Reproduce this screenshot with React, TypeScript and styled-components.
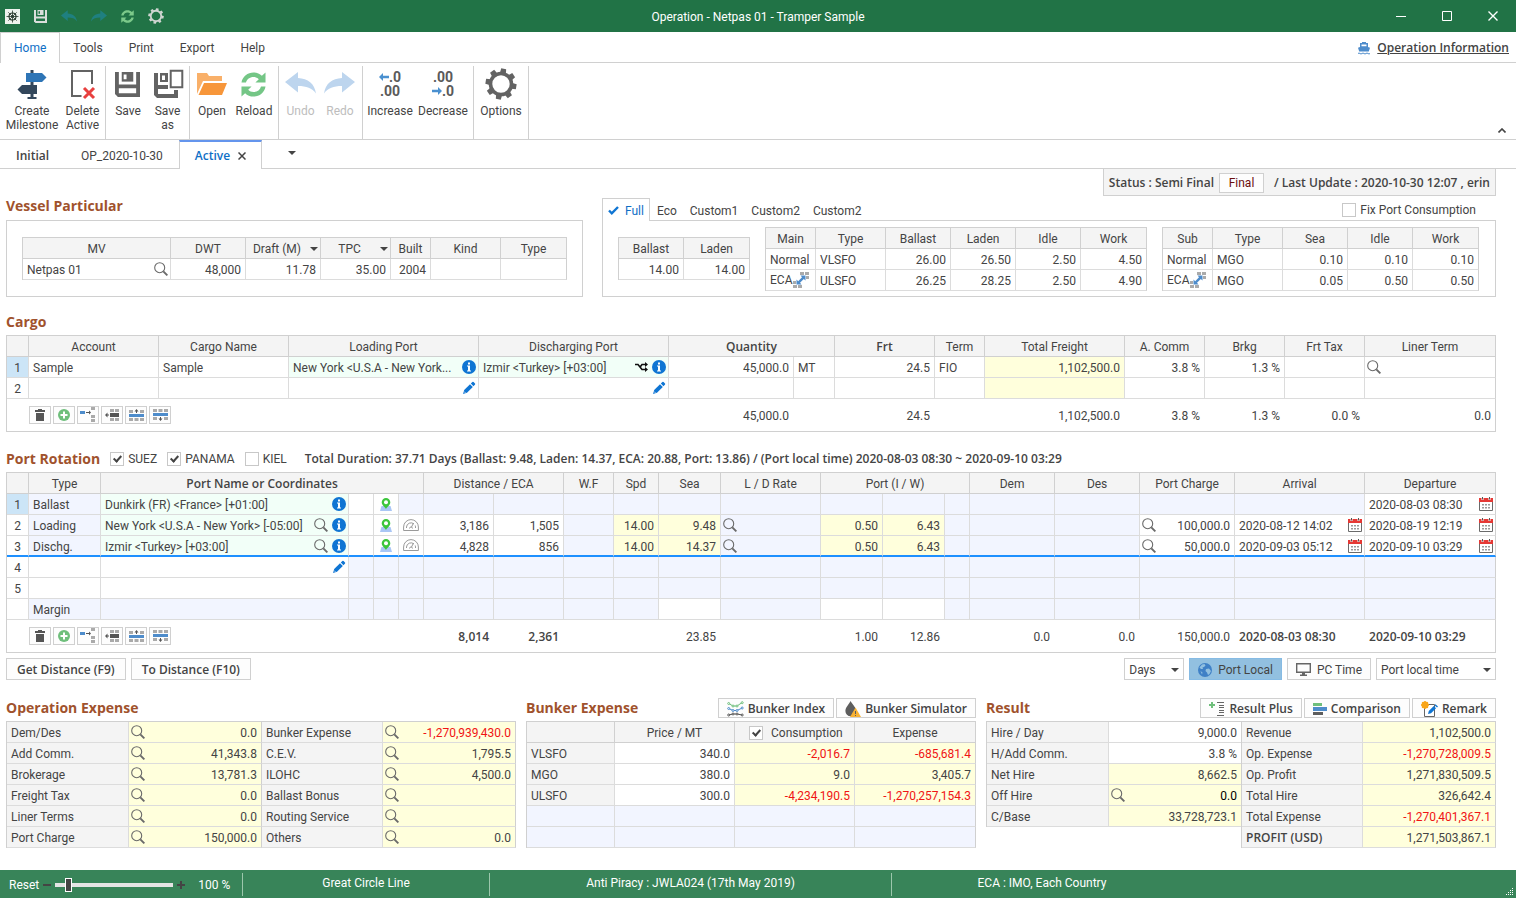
import React from 'react';
import styled, { createGlobalStyle, css } from 'styled-components';

const line = '#d0d0d0';
const innerLine = '#dcdcdc';
const ink = '#444444';
const blue = '#0f75d3';
const font = 'Roboto, "Open Sans", sans-serif';

const strong = css`
  font-family: "Open Sans", "Noto Sans", sans-serif;
  font-weight: 600;
`;

const Global = createGlobalStyle`
  *, *::before, *::after { box-sizing: border-box; }
  body { margin: 0; background: #fff; color: ${ink}; font: 12px/16px ${font}; }
  button, input, select { font: inherit; color: inherit; margin: 0; }
  button { cursor: pointer; }
  svg { display: block; flex: none; }
`;

/* ---------- shell ---------- */

const Window = styled.div`
  min-height: 100vh;
  display: flex;
  flex-direction: column;
`;

const TitleBar = styled.header`
  height: 32px;
  flex: none;
  display: grid;
  grid-template-columns: 1fr auto 1fr;
  align-items: center;
  background: #217346;
  color: #fff;
`;

const QuickAccess = styled.div`
  display: flex;
  align-items: center;
  gap: 14px;
  padding-left: 5px;
`;

const PlainButton = styled.button`
  display: inline-flex;
  align-items: center;
  justify-content: center;
  flex: none;
  padding: 0;
  border: 0;
  background: none;
`;

const Title = styled.h1`
  margin: 0;
  padding-top: 2px;
  font-size: 12px;
  line-height: 16px;
  font-weight: 400;
`;

const WindowButtons = styled.div`
  display: flex;
  justify-content: flex-end;
`;

const WindowButton = styled(PlainButton)`
  width: 46px;
  height: 32px;
`;

const MenuBar = styled.nav`
  height: 31px;
  flex: none;
  display: flex;
  align-items: stretch;
  border-bottom: 1px solid ${line};
`;

const MenuTab = styled.button<{ $active?: boolean }>`
  padding: 0 13px;
  margin-bottom: -1px;
  border: 0;
  background: none;
  ${p => p.$active && css`
    color: #0f6fc6;
    background: #fff;
    border: 1px solid ${line};
    border-bottom: 0;
  `}
`;

const InfoLink = styled.a`
  display: flex;
  align-items: center;
  gap: 7px;
  margin-left: auto;
  padding: 2px 7px 0 0;
  color: ${ink};
  ${strong}
`;

const Ribbon = styled.div`
  height: 77px;
  flex: none;
  display: flex;
  align-items: stretch;
  padding-top: 3px;
  border-bottom: 1px solid ${line};
`;

const RibbonGroup = styled.div`
  display: flex;
  align-items: flex-start;
  padding: 0 2px;
  border-right: 1px solid ${line};
`;

const RibbonButton = styled.button<{ $w: number; $off?: boolean }>`
  width: ${p => p.$w}px;
  padding: 2px 0 0;
  border: 0;
  background: none;
  display: flex;
  flex-direction: column;
  align-items: center;
  gap: 4px;
  line-height: 14px;
  ${p => p.$off && css`color: #bdbdbd;`}
`;

const DecimalIcon = styled.span`
  width: 30px;
  height: 32px;
  display: flex;
  flex-direction: column;
  align-items: center;
  justify-content: center;
  font-size: 14px;
  line-height: 14px;
  font-weight: 700;
  color: #5a5a5a;
`;

const DecimalRow = styled.span`
  display: flex;
  align-items: center;
`;

const RibbonToggle = styled(PlainButton)`
  align-self: flex-end;
  width: 28px;
  height: 18px;
  margin-left: auto;
`;

const DocTabs = styled.div`
  height: 29px;
  flex: none;
  display: flex;
  align-items: stretch;
  border-bottom: 1px solid ${line};
`;

const DocTab = styled.button<{ $active?: boolean; $bold?: boolean }>`
  display: flex;
  align-items: center;
  gap: 8px;
  padding: 4px 16px 0;
  border: 0;
  background: none;
  ${p => (p.$bold || p.$active) && strong}
  ${p => p.$active && css`
    margin-bottom: -1px;
    padding: 1px 15px 0;
    color: #0f6fc6;
    background: #fff;
    border: 1px solid ${line};
    border-top: 2px solid #6495ed;
    border-bottom: 0;
  `}
`;

const TabListButton = styled(PlainButton)`
  width: 60px;
  height: 25px;
`;

const Main = styled.main`
  flex: 1;
  padding: 0 20px 0 6px;
`;

const StatusLine = styled.div`
  width: fit-content;
  height: 27px;
  margin-left: auto;
  margin-bottom: 2px;
  padding: 2px 5px 0;
  display: flex;
  align-items: center;
  gap: 5px;
  background: #f4f4f4;
  border: 1px solid ${line};
  border-top: 0;
  ${strong}
`;

const Button = styled.button<{ $strong?: boolean; $on?: boolean }>`
  display: inline-flex;
  align-items: center;
  justify-content: center;
  gap: 6px;
  height: 22px;
  padding: 1px 10px 0;
  border: 1px solid ${line};
  background: #fdfdfd;
  white-space: nowrap;
  ${p => p.$strong && strong}
  ${p => p.$on && css`
    background: #92c0e0;
    border-color: #86bbe4;
  `}
`;

const TimeButton = styled(Button)`
  padding: 1px 8px 0;
`;

const HeadButton = styled(Button)`
  height: 20px;
  gap: 4px;
  padding: 1px 8px 0;
  ${strong}
`;

const FinalButton = styled(Button)`
  width: 45px;
  height: 20px;
  padding: 0;
  margin-right: 5px;
  color: #6b0f0f;
  font-family: ${font};
  font-weight: 400;
`;

const Heading = styled.h2`
  margin: 0;
  color: #a0522d;
  font-family: "Open Sans", "Noto Sans", sans-serif;
  font-size: 14px;
  line-height: 16px;
  font-weight: 700;
  white-space: nowrap;
`;

const TopRow = styled.div`
  display: flex;
  gap: 19px;
`;

const TopPane = styled.section<{ $grow: number }>`
  flex: ${p => p.$grow} 1 0;
  min-width: 0;
`;

const PaneHead = styled.div`
  height: 22px;
  display: flex;
  align-items: stretch;
`;

const PaneBox = styled.div`
  display: flex;
  gap: 15px;
  height: 77px;
  padding: 6px 16px 5px 15px;
  border: 1px solid ${line};
`;

const VesselBox = styled(PaneBox)`
  padding: 16px 15px;
`;

const TableSlot = styled.div<{ $grow: number; $low?: boolean }>`
  flex: ${p => p.$grow} 1 0;
  min-width: 0;
  padding-top: ${p => (p.$low ? 10 : 0)}px;
`;

const ProfileTab = styled.button<{ $active?: boolean }>`
  display: flex;
  align-items: center;
  gap: 6px;
  margin-bottom: -1px;
  padding: 2px 6px 0 7px;
  border: 0;
  background: none;
  ${p => p.$active && css`
    padding: 1px 5px 0;
    color: #0f6fc6;
    background: #fff;
    border: 1px solid ${line};
    border-bottom: 0;
  `}
`;

const CheckLabel = styled.label`
  display: flex;
  align-items: center;
  gap: 4px;
`;

const PushedCheckLabel = styled(CheckLabel)`
  margin-left: auto;
  padding: 2px 20px 0 0;
`;

const Check = styled.input.attrs({ type: 'checkbox' })`
  appearance: none;
  width: 14px;
  height: 14px;
  flex: none;
  display: grid;
  place-items: center;
  border: 1px solid #c8c8c8;
  background: #fff;
  &:checked::before {
    content: '';
    width: 5px;
    height: 8px;
    margin-top: -2px;
    border: solid #444;
    border-width: 0 2px 2px 0;
    transform: rotate(42deg);
  }
`;

/* ---------- tables ---------- */

const Grid = styled.table`
  width: 100%;
  table-layout: fixed;
  border-collapse: separate;
  border-spacing: 0;
  border: solid ${line};
  border-width: 1px 0 0 1px;
`;

type Tone = 'white' | 'head' | 'mint' | 'yellow' | 'lav' | 'pick';
const tones: Record<Tone, string> = {
  white: '#ffffff',
  head: '#f4f4f4',
  mint: '#f2fff8',
  yellow: '#ffffdc',
  lav: '#f2f5ff',
  pick: '#cce5f7',
};

type CellLook = { $tone?: Tone; $align?: string; $bold?: boolean; $color?: string; $marked?: boolean; $edge?: boolean };

const cellStyle = css<CellLook>`
  height: 21px;
  padding: 0;
  overflow: hidden;
  white-space: nowrap;
  line-height: 18px;
  font-weight: 400;
  text-align: ${p => p.$align ?? 'left'};
  color: ${p => p.$color ?? ink};
  background: ${p => tones[p.$tone ?? 'white']};
  border: solid ${innerLine};
  border-width: 0 1px 1px 0;
  ${p => p.$bold && strong}
  ${p => p.$edge && css`border-right-color: ${line};`}
  ${p => p.$marked && css`border-bottom: 2px solid #1e90ff;`}
  tr > &:last-child { border-right-color: ${line}; }
`;

const Td = styled.td<CellLook>`${cellStyle}`;
const Th = styled.th<CellLook>`${cellStyle}`;

const HeadTh = styled(Th)`
  padding-top: 2px;
  border-color: ${line};
`;

const CellBody = styled.div<{ $align?: string }>`
  display: flex;
  align-items: center;
  justify-content: ${p => (p.$align === 'right' ? 'flex-end' : p.$align === 'center' ? 'center' : 'flex-start')};
  gap: 4px;
  height: 18px;
  padding: 0 2px;
`;

const CellText = styled.span`
  flex: 1;
  min-width: 0;
  padding: 2px 2px 0;
  line-height: 16px;
  overflow: hidden;
  text-overflow: ellipsis;
`;

const HeadText = styled(CellText)`
  padding-top: 0;
  line-height: 18px;
`;

const FuelKey = styled.span`
  display: flex;
  align-items: center;
  gap: 1px;
  padding-left: 2px;
`;

const FootTd = styled.td<{ $align?: string; $bold?: boolean }>`
  height: 33px;
  padding: 2px 5px 0 4px;
  border-bottom: 1px solid ${line};
  text-align: ${p => p.$align ?? 'right'};
  white-space: nowrap;
  ${p => p.$bold && strong}
  &:first-child { padding-top: 0; }
  &:last-child { border-right: 1px solid ${line}; padding-right: 4px; }
`;

const ToolRow = styled.div`
  display: flex;
  gap: 2px;
  padding-left: 18px;
`;

const ToolButton = styled(PlainButton)`
  width: 22px;
  height: 18px;
  border: 1px solid ${line};
  background: #fdfdfd;
`;

const SectionHead = styled.div<{ $top: number }>`
  height: 26px;
  margin-top: ${p => p.$top}px;
  display: flex;
  align-items: center;
  gap: 10px;
`;

const Duration = styled.p`
  margin: 0 0 0 8px;
  white-space: nowrap;
  ${strong}
`;

const ActionRow = styled.div`
  display: flex;
  gap: 5px;
  margin-top: 5px;
`;

const Spacer = styled.span`
  flex: 1;
`;

const SelectWrap = styled.span<{ $w: number }>`
  position: relative;
  display: block;
  width: ${p => p.$w}px;
  svg { position: absolute; right: 5px; top: 10px; pointer-events: none; }
`;

const Select = styled.select`
  appearance: none;
  width: 100%;
  height: 22px;
  padding: 1px 4px 0;
  border: 1px solid ${line};
  border-radius: 0;
  background: #fff;
`;

const BottomGrid = styled.div`
  display: grid;
  grid-template-columns: 17fr 15fr 17fr;
  gap: 10px;
  margin-top: 18px;
  padding-bottom: 18px;
`;

const BottomPane = styled.section`
  min-width: 0;
`;

const BottomHead = styled.div`
  height: 20px;
  margin-bottom: 3px;
  display: flex;
  align-items: center;
  gap: 2px;
`;

const SplitTables = styled.div`
  display: flex;
  align-items: flex-start;
`;

const SplitPart = styled.div<{ $grow: number; $joined?: boolean }>`
  flex: ${p => p.$grow} 1 0;
  min-width: 0;
  margin-left: ${p => (p.$joined ? -1 : 0)}px;
`;

const ConsumptionHead = styled.label`
  display: flex;
  align-items: center;
  gap: 8px;
  padding-left: 14px;
  height: 18px;
`;

/* ---------- status bar ---------- */

const StatusBar = styled.footer`
  position: relative;
  height: 28px;
  flex: none;
  display: flex;
  align-items: center;
  background: #388459;
  color: #fff;
`;

const StatusPart = styled.div<{ $w: number; $last?: boolean }>`
  width: ${p => p.$w}px;
  height: 23px;
  padding-bottom: 2px;
  display: flex;
  align-items: center;
  justify-content: center;
  ${p => !p.$last && css`border-right: 1px solid #9cc7ac;`}
`;

const ZoomPart = styled(StatusPart)`
  justify-content: flex-start;
  gap: 4px;
  padding: 2px 0 0 9px;
`;

const ZoomValue = styled.output`
  margin-left: 9px;
`;

const Slider = styled.input.attrs({ type: 'range' })`
  appearance: none;
  width: 118px;
  height: 14px;
  background: linear-gradient(#e4e4e4, #e4e4e4) center / 100% 4px no-repeat;
  &::-webkit-slider-thumb {
    appearance: none;
    width: 7px;
    height: 14px;
    background: #444;
    border: 1px solid #fff;
  }
`;

const Grip = styled.span`
  position: absolute;
  right: 2px;
  bottom: 2px;
`;

/* ---------- icons ---------- */

const Caret = () => (
  <svg width="8" height="4" viewBox="0 0 8 4"><path d="M0 0h8L4 4z" fill="#444" /></svg>
);

const Magnifier = () => (
  <svg width="14" height="14" viewBox="0 0 14 14" fill="none" stroke="#6a6a6a">
    <circle cx="5.7" cy="5.7" r="5" strokeWidth="1.1" />
    <path d="M9.3 9.3l4.1 4.1" strokeWidth="1.9" />
  </svg>
);

const InfoIcon = () => (
  <svg width="14" height="14" viewBox="0 0 14 14">
    <circle cx="7" cy="7" r="7" fill={blue} />
    <path d="M6 2.5h2v2H6zM5 5.5h3v5h1v1H5v-1h1v-4H5z" fill="#fff" />
  </svg>
);

const Pencil = () => (
  <svg width="14" height="14" viewBox="0 0 14 14" fill={blue}>
    <path d="M1 13l1.2-4L8 3.2 10.8 6 5 11.8z" />
    <path d="M8.8 2.4l1.6-1.5q.6-.4 1.2.1l1.4 1.4q.5.6 0 1.2l-1.5 1.6z" />
    <path d="M2.2 10.6l1.2 1.2" stroke="#fff" strokeWidth=".8" />
  </svg>
);

const PinIcon = () => (
  <svg width="12" height="13" viewBox="0 0 12 13">
    <path d="M1.5 8h9l1.5 5H0z" fill="#a9c6f5" />
    <path d="M6 0a4.3 4.3 0 0 1 4.3 4.3C10.3 7 7.500 8.500 6 11 4.500 8.500 1.700 7 1.700 4.300A4.300 4.300 0 0 1 6 0z" fill="#3cc63c" />
    <circle cx="6" cy="4.3" r="2" fill="#fff" />
  </svg>
);

const GaugeIcon = () => (
  <svg width="16" height="13" viewBox="0 0 16 13" fill="none" stroke="#9a9a9a">
    <path d="M.6 11.5V8a7.4 7.4 0 0 1 14.8 0v3.5z" />
    <path d="M3.5 9V8a4.5 4.5 0 0 1 7.5-3M12.5 9V8q0-1-.3-1.5M6.5 9.500q0-1.500 1.500-1.500t1.500 1.500M8.500 8l2-4" />
  </svg>
);

const CalendarIcon = () => (
  <svg width="14" height="14" viewBox="0 0 14 14">
    <path d="M.5 4.5v9h13v-9" fill="#fff" stroke="#6a6a6a" />
    <path d="M0 1h14v4H0z" fill="#e53935" />
    <path d="M3.5 0v3M10.5 0v3" stroke="#fff" strokeWidth="2" />
    <path d="M3.5 0v2.5M10.5 0v2.5" stroke="#555" />
    <path d="M3 7h2v1.5H3zM6 7h2v1.5H6zM9 7h2v1.5H9zM3 10h2v1.5H3zM6 10h2v1.5H6zM9 10h2v1.5H9z" fill="#999" />
  </svg>
);

const ShuffleIcon = () => (
  <svg width="13" height="10" viewBox="0 0 13 10" fill="none" stroke="#111" strokeWidth="1.6">
    <path d="M0 2.500h3l4 5h4M5.500 4.500l1.500-2h4" />
    <path d="M10 0l3 2.500L10 5zM10 5l3 2.500-3 2.500z" fill="#111" stroke="none" />
  </svg>
);

const SwapIcon = () => (
  <svg width="16" height="16" viewBox="0 0 16 16">
    <path d="M7 0h4v3H7zM12 0h4v3h-4zM13 4h3v3h-3zM0 9h3v3H0zM0 13h4v3H0zM5 13h4v3H5z" fill="#aaa" />
    <path d="M12.500 3.500v5L10.800 7 7 10.800l1.500 1.700h-5v-5L5.200 9.200 9 5.300 7.500 3.500z" fill="#4e8ccb" />
  </svg>
);

const TrashIcon = () => (
  <svg width="10" height="12" viewBox="0 0 10 12" fill="#555"><path d="M3 0h4v1h3v2H0V1h3zM1 4h8v8H1z" /></svg>
);

const PlusIcon = () => (
  <svg width="12" height="12" viewBox="0 0 12 12">
    <circle cx="6" cy="6" r="6" fill="#6fbf7c" />
    <path d="M6 2.500v7M2.500 6h7" stroke="#fff" strokeWidth="2" />
  </svg>
);

const MoveIcon = () => (
  <svg width="16" height="16" viewBox="0 0 16 16">
    <path d="M0 4h5v3H0z" fill="#4e8ccb" />
    <path d="M6 5h3V3.500L11 5.500 9 7.500V6H6z" fill="#555" />
    <path d="M11 0h4v3h-4zM11 8h4v3h-4zM11 12h4v3h-4z" fill="#aaa" />
  </svg>
);

const InsertIcon = () => (
  <svg width="14" height="12" viewBox="0 0 14 12">
    <path d="M5 0h4v3H5zM10 0h4v3h-4zM5 9h4v3H5zM10 9h4v3h-4z" fill="#aaa" />
    <path d="M5 4h9v4H5zM0 6l2.500-2.500v2H4v1H2.500v2z" fill="#555" />
  </svg>
);

const RowUpIcon = () => (
  <svg width="15" height="12" viewBox="0 0 15 12">
    <path d="M0 1h4v3H0zM11 1h4v3h-4zM0 9h4v3H0zM5.500 9h4v3h-4zM11 9h4v3h-4z" fill="#aaa" />
    <path d="M7.500 0l2 2.500H8V4H7V2.500H5.500z" fill="#555" />
    <path d="M0 5h15v3H0z" fill="#4e8ccb" />
  </svg>
);

const RowDownIcon = () => (
  <svg width="15" height="12" viewBox="0 0 15 12">
    <path d="M0 0h4v3H0zM5.500 0h4v3h-4zM11 0h4v3h-4zM0 8h4v3H0zM11 8h4v3h-4z" fill="#aaa" />
    <path d="M7.500 12l2-2.500H8V8H7v1.500H5.500z" fill="#555" />
    <path d="M0 4h15v3H0z" fill="#4e8ccb" />
  </svg>
);

const CheckMark = () => (
  <svg width="11" height="9" viewBox="0 0 11 9" fill="none" stroke={blue} strokeWidth="2.4"><path d="M1 4.500l2.800 2.800L10 1" /></svg>
);

const CloseIcon = () => (
  <svg width="8" height="8" viewBox="0 0 8 8" stroke="#444" strokeWidth="1.5"><path d="M.5.500l7 7M7.500.500l-7 7" /></svg>
);

const HelmIcon = () => (
  <svg width="15" height="15" viewBox="0 0 15 15">
    <path d="M0 0h15v15H0z" fill="#eef3ee" />
    <g fill="none" stroke="#2a3b2f">
      <circle cx="7.500" cy="7.500" r="3.500" strokeWidth="1.200" />
      <circle cx="7.500" cy="7.500" r="1" />
      <path d="M7.500 1.500v12M1.500 7.500h12M3.300 3.300l8.400 8.400M11.700 3.300l-8.400 8.400" strokeWidth=".8" />
    </g>
  </svg>
);

const Floppy = ({ size, color, hole }: { size: number; color: string; hole: string }) => (
  <svg width={size} height={size} viewBox="0 0 26 26">
    <path d="M0 0h26v26H3l-3-3z" fill={color} />
    <path d="M4 0h18v13H4z" fill={hole} />
    <path d="M7 0h12v10H7z" fill={color} />
    <path d="M9 2.500h3v5H9zM4 17h18v5H4z" fill={hole} />
  </svg>
);

const SaveAsIcon = () => (
  <svg width="32" height="32" viewBox="0 0 32 32">
    <path d="M2 5h24v25H5l-3-3z" fill="#636363" />
    <path d="M6 5h12v12H6zM6 21h16v5H6z" fill="#fff" />
    <path d="M8 5h10v9H8z" fill="#636363" />
    <path d="M10 7.500h3v4.500h-3zM16 0h16v22H16z" fill="#fff" />
    <path d="M18.700 2.700h11.600v16.600H18.700z" fill="#fff" stroke="#636363" strokeWidth="2" />
  </svg>
);

const UndoIcon = ({ w, h, color, flip }: { w: number; h: number; color: string; flip?: boolean }) => (
  <svg width={w} height={h} viewBox="0 0 31 22">
    <path
      d="M0 10L13 0v6c10 .5 16.500 5.500 18 15.500-4-5.500-9.500-7.500-18-7.500v6.500z"
      fill={color}
      transform={flip ? 'matrix(-1 0 0 1 31 0)' : undefined}
    />
  </svg>
);

const ReloadIcon = ({ size, color }: { size: number; color: string }) => (
  <svg width={size} height={size} viewBox="0 0 26 26">
    <path d="M.500 11C1.500 4.500 7 .500 13 .500c3.500 0 6.500 1.300 8.700 3.500L25.500 .500V11H15l3.500-3.500C17 6 15.200 5.200 13 5.200c-4 0-6.800 2.300-7.800 5.800z" fill={color} />
    <path d="M25.500 15C24.500 21.500 19 25.500 13 25.500c-3.500 0-6.500-1.300-8.700-3.500L.500 25.500V15H11l-3.500 3.500C9 20 10.800 20.800 13 20.800c4 0 6.800-2.300 7.800-5.800z" fill={color} />
  </svg>
);

const GearIcon = ({ size, color }: { size: number; color: string }) => (
  <svg width={size} height={size} viewBox="0 0 32 32">
    <circle cx="16" cy="16" r="10.500" fill="none" stroke={color} strokeWidth="3.600" />
    {[0, 45, 90, 135, 180, 225, 270, 315].map(a => (
      <path key={a} d="M13 5L13.500 .5h5L19 5z" fill={color} transform={`rotate(${a + 10} 16 16)`} />
    ))}
  </svg>
);

const MilestoneIcon = () => (
  <svg width="30" height="32" viewBox="0 0 30 32">
    <path d="M13.500 2h3v3h-3zM13.500 14h3v3h-3zM13.500 26h3v3h-3zM10.500 29h9v2h-9z" fill="#33475b" />
    <path d="M9 5h16l4.500 4.500L25 14H9z" fill="#2e75b6" />
    <path d="M5 17h15v9H5L.500 21.500z" fill="#33475b" />
  </svg>
);

const DeleteIcon = () => (
  <svg width="26" height="32" viewBox="0 0 26 32">
    <path d="M11.500 28H2V3h20v13" fill="none" stroke="#636363" strokeWidth="2" />
    <path d="M14 20l10 10M24 20L14 30" stroke="#e8403f" strokeWidth="3" />
  </svg>
);

const FolderIcon = () => (
  <svg width="30" height="32" viewBox="0 0 30 32">
    <path d="M0 5h10l2 3h13v5H6L0 26z" fill="#f9b069" />
    <path d="M7 15h23l-5 12H1.500z" fill="#f7963a" />
  </svg>
);

const ArrowIcon = ({ right }: { right?: boolean }) => (
  <svg width="10" height="8" viewBox="0 0 10 8">
    <path d="M0 4l4-4v2.800h6v2.400H4V8z" fill="#4a90d0" transform={right ? 'matrix(-1 0 0 1 10 0)' : undefined} />
  </svg>
);

const ShipIcon = () => (
  <svg width="12" height="13" viewBox="0 0 12 13">
    <path d="M4 0h4v1h2v4l2 .800L10.800 9.500H1.200L0 5.800 2 5V1h2zM3.500 2.500v1.800h5V2.500z" fill="#4e8ccb" fillRule="evenodd" />
    <path d="M0 11.500q1-1 2 0t2 0 2 0 2 0 2 0 2 0" stroke="#4e8ccb" fill="none" />
  </svg>
);

const ChevronUp = () => (
  <svg width="8" height="5" viewBox="0 0 8 5" fill="none" stroke="#444" strokeWidth="1.6"><path d="M.500 4.500L4 1l3.500 3.500" /></svg>
);

const GlobeIcon = () => (
  <svg width="14" height="14" viewBox="0 0 14 14">
    <circle cx="7" cy="7" r="7" fill="#3f80c6" />
    <path d="M4 1.500L6.500 1l1 1.500L6 4l-1.500.5L5 6H3L1.500 4.500zM8 6l3-.5L13 8l-1.500 3L10 12 9 9.500 7.500 8zM2.500 8l2 1.500-.5 2z" fill="#92c0e0" />
  </svg>
);

const MonitorIcon = () => (
  <svg width="15" height="13" viewBox="0 0 15 13">
    <path d="M.700.700h13.600v8.600H.700z" fill="none" stroke="#666" strokeWidth="1.4" />
    <path d="M6 10h3v1.500h2V13H4v-1.500h2z" fill="#666" />
  </svg>
);

const traces = [
  { color: '#6fbf7c', path: 'M1.700 2.500L6 5h4l5.200-3.500', dots: [[1.7, 2.5], [6, 5], [10, 5], [15.2, 1.7]] },
  { color: '#4e8ccb', path: 'M1.700 7.500L6 9.500h4l5.200-2.500', dots: [[1.7, 7.5], [6, 9.5], [10, 9.5], [15.2, 7]] },
  { color: '#555', path: 'M1.700 14L6 13h4l5.200 1', dots: [[1.7, 14], [6, 13], [10, 13], [15.2, 14]] },
];

const IndexIcon = () => (
  <svg width="17" height="16" viewBox="0 0 17 16" fill="none">
    {traces.map(t => (
      <g key={t.color} stroke={t.color} strokeWidth="1">
        <path d={t.path} />
        {t.dots.map(([x, y]) => <circle key={x} cx={x} cy={y} r="1" fill="#fff" />)}
      </g>
    ))}
  </svg>
);

const DropIcon = () => (
  <svg width="16" height="16" viewBox="0 0 16 16">
    <path d="M5.500 0C8 4 11 6.500 11 10a5.300 5.300 0 0 1-10.600 0C.400 6.500 3.500 4 5.500 0z" fill="#5d5d5d" />
    <path d="M10.500 6.500L16 16H5z" fill="#f9b233" />
    <path d="M10 10h1v3h-1zM10 14h1v1h-1z" fill="#5d5d5d" />
  </svg>
);

const ResultPlusIcon = () => (
  <svg width="16" height="14" viewBox="0 0 16 14">
    <path d="M3 0v6M0 3h6" stroke="#6fbf7c" strokeWidth="2" />
    <path d="M8 .5h7M10 3.500h5M10 5.500h5M10 8.500h5M10 10.500h5M8 13.500h7" stroke="#666" />
  </svg>
);

const BarsIcon = () => (
  <svg width="14" height="12" viewBox="0 0 14 12">
    <path d="M0 0h9v3H0z" fill="#6fbf7c" /><path d="M0 4h14v4H0z" fill="#4e8ccb" /><path d="M0 9h10v3H0z" fill="#5d5d5d" />
  </svg>
);

const RemarkIcon = () => (
  <svg width="17" height="16" viewBox="0 0 17 16">
    <path d="M3.500 3.500h10v12h-10z" fill="#fff" stroke="#666" />
    <circle cx="4" cy="4" r="3.500" fill="#f9a61a" />
    <path d="M4 0v8M0 4h8M1.200 1.200l5.600 5.600M6.800 1.200L1.200 6.800" stroke="#f9a61a" strokeWidth="1.5" />
    <path d="M7 13l.800-3 5-5L15 7.300l-5 5zM13.500 4.200l1-1L17 5.500l-1 1z" fill={blue} />
  </svg>
);

/* ---------- cell helpers ---------- */

type Cell = {
  t?: string;
  tone?: Tone;
  align?: 'left' | 'right' | 'center';
  bold?: boolean;
  color?: string;
  pre?: React.ReactNode;
  post?: React.ReactNode;
  edge?: boolean;
  head?: boolean;
};

const iconButton = (label: string, icon: React.ReactNode) => (
  <PlainButton type="button" aria-label={label}>{icon}</PlainButton>
);
const find = iconButton('Look up', <Magnifier />);
const info = iconButton('Details', <InfoIcon />);
const edit = iconButton('Edit', <Pencil />);
const pin = iconButton('Show on map', <PinIcon />);
const gauge = iconButton('Speed', <GaugeIcon />);
const calendar = iconButton('Pick a date', <CalendarIcon />);

const L = (t = '', tone: Tone = 'white', extra: Partial<Cell> = {}): Cell => ({ t, tone, align: 'left', ...extra });
const R = (t = '', tone: Tone = 'white', extra: Partial<Cell> = {}): Cell => ({ t, tone, align: 'right', ...extra });
const H = (t: string, extra: Partial<Cell> = {}): Cell => ({ t, tone: 'head', head: true, align: 'left', ...extra });
const Y = (t = '', extra: Partial<Cell> = {}): Cell => R(t, 'yellow', t.startsWith('-') ? { color: '#f01414', ...extra } : extra);
const lav = (n: number): Cell[] => Array.from({ length: n }, () => ({ tone: 'lav' as Tone }));
const blank = (n: number): Cell[] => Array.from({ length: n }, () => ({}));

const Cols = ({ w }: { w: number[] }) => (
  <colgroup>{w.map((x, i) => <col key={i} style={{ width: x }} />)}</colgroup>
);

const BodyRow = ({ cells, marked }: { cells: Cell[]; marked?: boolean }) => (
  <tr>
    {cells.map((c, i) => {
      const Tag = (c.head ? Th : Td) as typeof Td;
      return (
        <Tag key={i} $tone={c.tone} $align={c.align} $bold={c.bold} $color={c.color} $marked={marked} $edge={c.edge}>
          <CellBody $align={c.align}>
            {c.pre}
            {c.t ? <CellText>{c.t}</CellText> : null}
            {c.post}
          </CellBody>
        </Tag>
      );
    })}
  </tr>
);

type HeadCell = string | { t: string; span?: number; bold?: boolean; caret?: boolean };

const HeadRow = ({ cells }: { cells: HeadCell[] }) => (
  <thead>
    <tr>
      {cells.map((c, i) => {
        const h = typeof c === 'string' ? { t: c } : c;
        return (
          <HeadTh key={i} scope="col" colSpan={h.span} $tone="head" $align="center" $bold={h.bold}>
            {h.caret ? <CellBody><HeadText>{h.t}</HeadText><Caret /></CellBody> : h.t}
          </HeadTh>
        );
      })}
    </tr>
  </thead>
);

const DataTable = ({ w, head, rows, label, markedRow, foot }: {
  w: number[]; head?: HeadCell[]; rows: Cell[][]; label: string; markedRow?: number; foot?: React.ReactNode;
}) => (
  <Grid aria-label={label}>
    <Cols w={w} />
    {head && <HeadRow cells={head} />}
    <tbody>{rows.map((r, i) => <BodyRow key={i} cells={r} marked={i === markedRow} />)}</tbody>
    {foot && <tfoot><tr>{foot}</tr></tfoot>}
  </Grid>
);

const RowTools = () => (
  <ToolRow>
    <ToolButton type="button" aria-label="Delete row"><TrashIcon /></ToolButton>
    <ToolButton type="button" aria-label="Add row"><PlusIcon /></ToolButton>
    <ToolButton type="button" aria-label="Move row"><MoveIcon /></ToolButton>
    <ToolButton type="button" aria-label="Insert row"><InsertIcon /></ToolButton>
    <ToolButton type="button" aria-label="Move row up"><RowUpIcon /></ToolButton>
    <ToolButton type="button" aria-label="Move row down"><RowDownIcon /></ToolButton>
  </ToolRow>
);

/* ---------- data ---------- */

const num = (t: string, tone: Tone = 'white'): Cell => ({ t, tone, align: 'center' });

const cargoRows: Cell[][] = [
  [
    num('1', 'pick'), L('Sample'), L('Sample'),
    L('New York <U.S.A - New York...', 'mint', { post: info }),
    L('Izmir <Turkey> [+03:00]', 'mint', { post: <>{iconButton('Options', <ShuffleIcon />)}{info}</> }),
    R('45,000.0'), L('MT'), R('24.5'), L('FIO'), Y('1,102,500.0'), R('3.8 %'), R('1.3 %'), {}, { pre: find },
  ],
  [
    num('2'), {}, {}, { align: 'right', post: edit }, { align: 'right', post: edit },
    ...blank(4), { tone: 'yellow' }, ...blank(4),
  ],
];

const legRow = (n: string, type: string, port: string, dist: string, eca: string, sea: string, charge: string, arr: string, dep: string): Cell[] => [
  num(n), L(type, 'lav'), L(port, 'mint', { post: <>{find}{info}</> }), {},
  { align: 'center', post: pin }, { align: 'center', post: gauge },
  R(dist), R(eca), ...lav(1), Y('14.00'), Y(sea), { tone: 'lav', pre: find },
  Y('0.50'), Y('6.43'), ...lav(3), R(charge, 'white', { pre: find }),
  L(arr, 'white', { post: calendar }), L(dep, 'white', { post: calendar }),
];

const portRows: Cell[][] = [
  [
    num('1', 'pick'), L('Ballast', 'lav'), L('Dunkirk (FR) <France> [+01:00]', 'mint', { post: info }), {},
    { align: 'center', post: pin }, ...lav(14), L('2020-08-03 08:30', 'white', { post: calendar }),
  ],
  legRow('2', 'Loading', 'New York <U.S.A - New York> [-05:00]', '3,186', '1,505', '9.48', '100,000.0', '2020-08-12 14:02', '2020-08-19 12:19'),
  legRow('3', 'Dischg.', 'Izmir <Turkey> [+03:00]', '4,828', '856', '14.37', '50,000.0', '2020-09-03 05:12', '2020-09-10 03:29'),
  [num('4'), {}, { align: 'right', post: edit }, ...lav(17)],
  [num('5'), {}, {}, ...lav(17)],
  [{}, L('Margin', 'lav'), ...lav(8), {}, ...lav(1), {}, {}, ...lav(6)],
];

const expense = (a: string, av: string, b: string, bv: string): Cell[] => [
  H(a), Y(av, { pre: find, edge: true }), H(b), Y(bv, { pre: find, align: bv ? 'right' : 'left' }),
];

const expenseRows: Cell[][] = [
  expense('Dem/Des', '0.0', 'Bunker Expense', '-1,270,939,430.0'),
  expense('Add Comm.', '41,343.8', 'C.E.V.', '1,795.5'),
  expense('Brokerage', '13,781.3', 'ILOHC', '4,500.0'),
  expense('Freight Tax', '0.0', 'Ballast Bonus', ''),
  expense('Liner Terms', '0.0', 'Routing Service', ''),
  expense('Port Charge', '150,000.0', 'Others', '0.0'),
];

const bunkerRows: Cell[][] = [
  [H('VLSFO'), R('340.0'), Y('-2,016.7'), Y('-685,681.4')],
  [H('MGO'), R('380.0'), Y('9.0'), Y('3,405.7')],
  [H('ULSFO'), R('300.0'), Y('-4,234,190.5'), Y('-1,270,257,154.3')],
  lav(4),
  lav(4),
];

const hireRows: Cell[][] = [
  [H('Hire / Day'), R('9,000.0')],
  [H('H/Add Comm.'), R('3.8 %')],
  [H('Net Hire'), Y('8,662.5')],
  [H('Off Hire'), Y('0.0', { pre: find, color: '#000' })],
  [H('C/Base'), Y('33,728,723.1')],
];

const resultRows: Cell[][] = [
  [H('Revenue'), Y('1,102,500.0')],
  [H('Op. Expense'), Y('-1,270,728,009.5')],
  [H('Op. Profit'), Y('1,271,830,509.5')],
  [H('Total Hire'), Y('326,642.4')],
  [H('Total Expense'), Y('-1,270,401,367.1')],
  [H('PROFIT (USD)', { bold: true }), Y('1,271,503,867.1')],
];

const eca: Cell = { pre: <FuelKey>ECA{iconButton('Swap fuel', <SwapIcon />)}</FuelKey> };

/* ---------- page ---------- */

export default function App() {
  return (
    <Window>
      <Global />
      <TitleBar>
        <QuickAccess>
          <HelmIcon />
          <PlainButton aria-label="Save"><Floppy size={13} color="#d9dedb" hole="#217346" /></PlainButton>
          <PlainButton aria-label="Undo"><UndoIcon w={16} h={12} color="#1f8080" /></PlainButton>
          <PlainButton aria-label="Redo"><UndoIcon w={16} h={12} color="#1f8080" flip /></PlainButton>
          <PlainButton aria-label="Reload"><ReloadIcon size={13} color="#7cc98a" /></PlainButton>
          <PlainButton aria-label="Options"><GearIcon size={16} color="#d0d6d2" /></PlainButton>
        </QuickAccess>
        <Title>Operation - Netpas 01 - Tramper Sample</Title>
        <WindowButtons>
          <WindowButton aria-label="Minimize"><svg width="10" height="1"><path d="M0 0h10v1H0z" fill="#fff" /></svg></WindowButton>
          <WindowButton aria-label="Maximize"><svg width="10" height="10"><path d="M.5.5h9v9h-9z" fill="none" stroke="#fff" /></svg></WindowButton>
          <WindowButton aria-label="Close"><svg width="10" height="10"><path d="M.5.5l9 9M9.5.5l-9 9" stroke="#fff" strokeWidth="1.4" /></svg></WindowButton>
        </WindowButtons>
      </TitleBar>

      <MenuBar>
        <MenuTab $active>Home</MenuTab>
        <MenuTab>Tools</MenuTab>
        <MenuTab>Print</MenuTab>
        <MenuTab>Export</MenuTab>
        <MenuTab>Help</MenuTab>
        <InfoLink href="#info"><ShipIcon />Operation Information</InfoLink>
      </MenuBar>

      <Ribbon>
        <RibbonGroup>
          <RibbonButton $w={60}><MilestoneIcon /><span>Create<br />Milestone</span></RibbonButton>
          <RibbonButton $w={41}><DeleteIcon /><span>Delete<br />Active</span></RibbonButton>
        </RibbonGroup>
        <RibbonGroup>
          <RibbonButton $w={40}><svg width="26" height="32" viewBox="0 0 26 32"><g transform="translate(0 4)"><Floppy size={25} color="#636363" hole="#fff" /></g></svg>Save</RibbonButton>
          <RibbonButton $w={39}><SaveAsIcon /><span>Save<br />as</span></RibbonButton>
        </RibbonGroup>
        <RibbonGroup>
          <RibbonButton $w={40}><FolderIcon />Open</RibbonButton>
          <RibbonButton $w={44}><svg width="26" height="32" viewBox="0 0 26 32"><g transform="translate(0 4)"><ReloadIcon size={25} color="#74c686" /></g></svg>Reload</RibbonButton>
        </RibbonGroup>
        <RibbonGroup>
          <RibbonButton $w={39} $off><svg width="32" height="32" viewBox="0 0 32 32"><g transform="translate(0 4)"><UndoIcon w={31} h={22} color="#bdd5ee" /></g></svg>Undo</RibbonButton>
          <RibbonButton $w={40} $off><svg width="32" height="32" viewBox="0 0 32 32"><g transform="translate(0 4)"><UndoIcon w={31} h={22} color="#bdd5ee" flip /></g></svg>Redo</RibbonButton>
        </RibbonGroup>
        <RibbonGroup>
          <RibbonButton $w={50}><DecimalIcon><DecimalRow><ArrowIcon />.0</DecimalRow><DecimalRow>.00</DecimalRow></DecimalIcon>Increase</RibbonButton>
          <RibbonButton $w={56}><DecimalIcon><DecimalRow>.00</DecimalRow><DecimalRow><ArrowIcon right />.0</DecimalRow></DecimalIcon>Decrease</RibbonButton>
        </RibbonGroup>
        <RibbonGroup>
          <RibbonButton $w={50}><GearIcon size={32} color="#636363" />Options</RibbonButton>
        </RibbonGroup>
        <RibbonToggle aria-label="Collapse ribbon"><ChevronUp /></RibbonToggle>
      </Ribbon>

      <DocTabs>
        <DocTab $bold>Initial</DocTab>
        <DocTab>OP_2020-10-30</DocTab>
        <DocTab $active>Active <CloseIcon /></DocTab>
        <TabListButton aria-label="More tabs"><Caret /></TabListButton>
      </DocTabs>

      <Main>
        <StatusLine>
          <span>Status : Semi Final</span>
          <FinalButton>Final</FinalButton>
          <span>/ Last Update : 2020-10-30 12:07 , erin</span>
        </StatusLine>

        <TopRow>
          <TopPane $grow={577}>
            <PaneHead><Heading>Vessel Particular</Heading></PaneHead>
            <VesselBox>
              <DataTable
                label="Vessel Particular"
                w={[148, 75, 75, 70, 40, 70, 66]}
                head={['MV', 'DWT', { t: 'Draft (M)', caret: true }, { t: 'TPC', caret: true }, 'Built', 'Kind', 'Type']}
                rows={[[L('Netpas 01', 'white', { post: find }), R('48,000'), R('11.78'), R('35.00'), R('2004'), {}, {}]]}
              />
            </VesselBox>
          </TopPane>
          <TopPane $grow={894}>
            <PaneHead>
              <ProfileTab $active><CheckMark />Full</ProfileTab>
              <ProfileTab>Eco</ProfileTab>
              <ProfileTab>Custom1</ProfileTab>
              <ProfileTab>Custom2</ProfileTab>
              <ProfileTab>Custom2</ProfileTab>
              <PushedCheckLabel><Check />Fix Port Consumption</PushedCheckLabel>
            </PaneHead>
            <PaneBox>
              <TableSlot $grow={132} $low>
                <DataTable label="Speed" w={[65, 66]} head={['Ballast', 'Laden']} rows={[[R('14.00'), R('14.00')]]} />
              </TableSlot>
              <TableSlot $grow={382}>
                <DataTable
                  label="Main engine consumption"
                  w={[50, 70, 65, 65, 65, 66]}
                  head={['Main', 'Type', 'Ballast', 'Laden', 'Idle', 'Work']}
                  rows={[
                    [L('Normal'), L('VLSFO'), R('26.00'), R('26.50'), R('2.50'), R('4.50')],
                    [eca, L('ULSFO'), R('26.25'), R('28.25'), R('2.50'), R('4.90')],
                  ]}
                />
              </TableSlot>
              <TableSlot $grow={317}>
                <DataTable
                  label="Sub engine consumption"
                  w={[50, 70, 65, 65, 66]}
                  head={['Sub', 'Type', 'Sea', 'Idle', 'Work']}
                  rows={[
                    [L('Normal'), L('MGO'), R('0.10'), R('0.10'), R('0.10')],
                    [eca, L('MGO'), R('0.05'), R('0.50'), R('0.50')],
                  ]}
                />
              </TableSlot>
            </PaneBox>
          </TopPane>
        </TopRow>

        <SectionHead $top={12}><Heading>Cargo</Heading></SectionHead>
        <DataTable
          label="Cargo"
          w={[22, 130, 130, 190, 190, 125, 41, 100, 50, 140, 80, 80, 80, 131]}
          head={['', 'Account', 'Cargo Name', 'Loading Port', 'Discharging Port', { t: 'Quantity', span: 2, bold: true }, { t: 'Frt', bold: true }, 'Term', 'Total Freight', 'A. Comm', 'Brkg', 'Frt Tax', 'Liner Term']}
          rows={cargoRows}
          foot={<>
            <FootTd colSpan={5}><RowTools /></FootTd>
            <FootTd>45,000.0</FootTd><FootTd /><FootTd>24.5</FootTd><FootTd />
            <FootTd>1,102,500.0</FootTd><FootTd>3.8 %</FootTd><FootTd>1.3 %</FootTd><FootTd>0.0 %</FootTd><FootTd>0.0</FootTd>
          </>}
        />

        <SectionHead $top={14}>
          <Heading>Port Rotation</Heading>
          <CheckLabel><Check defaultChecked />SUEZ</CheckLabel>
          <CheckLabel><Check defaultChecked />PANAMA</CheckLabel>
          <CheckLabel><Check />KIEL</CheckLabel>
          <Duration>Total Duration: 37.71 Days (Ballast: 9.48, Laden: 14.37, ECA: 20.88, Port: 13.86) / (Port local time) 2020-08-03 08:30 ~ 2020-09-10 03:29</Duration>
        </SectionHead>
        <DataTable
          label="Port Rotation"
          w={[22, 72, 248, 25, 25, 25, 70, 70, 50, 45, 62, 100, 62, 62, 25, 85, 85, 95, 130, 131]}
          head={['', 'Type', { t: 'Port Name or Coordinates', span: 4, bold: true }, { t: 'Distance / ECA', span: 2 }, 'W.F', 'Spd', 'Sea', 'L / D Rate', { t: 'Port (I / W)', span: 3 }, 'Dem', 'Des', 'Port Charge', 'Arrival', 'Departure']}
          rows={portRows}
          markedRow={2}
          foot={<>
            <FootTd colSpan={6}><RowTools /></FootTd>
            <FootTd $bold>8,014</FootTd><FootTd $bold>2,361</FootTd><FootTd /><FootTd />
            <FootTd>23.85</FootTd><FootTd /><FootTd>1.00</FootTd><FootTd>12.86</FootTd><FootTd />
            <FootTd>0.0</FootTd><FootTd>0.0</FootTd><FootTd>150,000.0</FootTd>
            <FootTd $bold $align="left">2020-08-03 08:30</FootTd><FootTd $bold $align="left">2020-09-10 03:29</FootTd>
          </>}
        />

        <ActionRow>
          <Button $strong>Get Distance (F9)</Button>
          <Button $strong>To Distance (F10)</Button>
          <Spacer />
          <SelectWrap $w={60}><Select aria-label="Unit"><option>Days</option></Select><Caret /></SelectWrap>
          <TimeButton $on><GlobeIcon />Port Local</TimeButton>
          <TimeButton><MonitorIcon />PC Time</TimeButton>
          <SelectWrap $w={120}><Select aria-label="Time basis"><option>Port local time</option></Select><Caret /></SelectWrap>
        </ActionRow>

        <BottomGrid>
          <BottomPane>
            <BottomHead><Heading>Operation Expense</Heading></BottomHead>
            <DataTable label="Operation Expense" w={[122, 133, 121, 133]} rows={expenseRows} />
          </BottomPane>
          <BottomPane>
            <BottomHead>
              <Heading>Bunker Expense</Heading>
              <Spacer />
              <HeadButton><IndexIcon />Bunker Index</HeadButton>
              <HeadButton><DropIcon />Bunker Simulator</HeadButton>
            </BottomHead>
            <Grid aria-label="Bunker Expense">
              <Cols w={[88, 120, 120, 121]} />
              <thead>
                <tr>
                  <HeadTh scope="col" $tone="head" />
                  <HeadTh scope="col" $tone="head" $align="center">Price / MT</HeadTh>
                  <HeadTh scope="col" $tone="head"><ConsumptionHead><Check defaultChecked />Consumption</ConsumptionHead></HeadTh>
                  <HeadTh scope="col" $tone="head" $align="center">Expense</HeadTh>
                </tr>
              </thead>
              <tbody>{bunkerRows.map((r, i) => <BodyRow key={i} cells={r} />)}</tbody>
            </Grid>
          </BottomPane>
          <BottomPane>
            <BottomHead>
              <Heading>Result</Heading>
              <Spacer />
              <HeadButton><ResultPlusIcon />Result Plus</HeadButton>
              <HeadButton><BarsIcon />Comparison</HeadButton>
              <HeadButton><RemarkIcon />Remark</HeadButton>
            </BottomHead>
            <SplitTables>
              <SplitPart $grow={256}><DataTable label="Hire" w={[122, 133]} rows={hireRows} /></SplitPart>
              <SplitPart $grow={255} $joined><DataTable label="Result" w={[121, 133]} rows={resultRows} /></SplitPart>
            </SplitTables>
          </BottomPane>
        </BottomGrid>
      </Main>

      <StatusBar>
        <ZoomPart $w={243}>
          <span>Reset</span>
          <PlainButton aria-label="Zoom out"><svg width="8" height="8"><path d="M0 3h8v2H0z" fill="#444" /></svg></PlainButton>
          <Slider aria-label="Zoom" min={0} max={100} defaultValue={9} />
          <PlainButton aria-label="Zoom in"><svg width="8" height="8"><path d="M0 3h8v2H0zM3 0h2v8H3z" fill="#444" /></svg></PlainButton>
          <ZoomValue>100 %</ZoomValue>
        </ZoomPart>
        <StatusPart $w={247}>Great Circle Line</StatusPart>
        <StatusPart $w={402}>Anti Piracy : JWLA024 (17th May 2019)</StatusPart>
        <StatusPart $w={300} $last>ECA : IMO, Each Country</StatusPart>
        <Grip><svg width="8" height="8"><path d="M6 0h1v1H6zM4 2h1v1H4zM6 2h1v1H6zM2 4h1v1H2zM4 4h1v1H4zM6 4h1v1H6zM0 6h1v1H0zM2 6h1v1H2zM4 6h1v1H4zM6 6h1v1H6z" fill="#fff" /></svg></Grip>
      </StatusBar>
    </Window>
  );
}
